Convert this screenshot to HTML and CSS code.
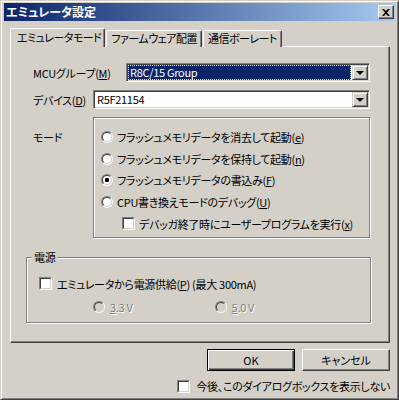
FILE: index.html
```html
<!DOCTYPE html>
<html lang="ja">
  <head>
    <meta charset="UTF-8" />
    <title>エミュレータ設定</title>
    <link rel="stylesheet" href="styles.css">
  </head>
  <body>
    <div class="window">
      <div class="titlebar">
        <span class="title">エミュレータ設定</span>
        <span class="close">
          <svg width="8" height="7" viewBox="0 0 8 7"><path d="M0 0h2l2 2 2-2h2L5 3.5 8 7H6L4 5 2 7H0l3-3.5z" fill="#000"/></svg>
        </span>
      </div>

      <div class="client">
        <div class="tabs">
          <div class="tab active">エミュレータモード</div>
          <div class="tab">ファームウェア配置</div>
          <div class="tab">通信ボーレート</div>
        </div>

        <div class="panel">
          <div class="row row-mcu">
            <span class="label label-mcu">MCUグループ(<u>M</u>)</span>
            <div class="combo combo-mcu">
              <div class="combo-value selected"><span>R8C/15 Group</span></div>
              <div class="drop"><i></i></div>
            </div>
          </div>

          <div class="row row-dev">
            <span class="label label-dev">デバイス(<u>D</u>)</span>
            <div class="combo combo-dev">
              <div class="combo-value">R5F21154</div>
              <div class="drop"><i></i></div>
            </div>
          </div>

          <div class="row row-mode">
            <span class="label label-mode">モード</span>
            <div class="group mode-group">
              <div class="option"><span class="radio"></span><span>フラッシュメモリデータを消去して起動(<u>e</u>)</span></div>
              <div class="option"><span class="radio"></span><span>フラッシュメモリデータを保持して起動(<u>n</u>)</span></div>
              <div class="option"><span class="radio on"></span><span>フラッシュメモリデータの書込み(<u>F</u>)</span></div>
              <div class="option"><span class="radio"></span><span>CPU書き換えモードのデバッグ(<u>U</u>)</span></div>
              <div class="option sub"><span class="check"></span><span>デバッガ終了時にユーザープログラムを実行(<u>x</u>)</span></div>
            </div>
          </div>

          <div class="group power-group">
            <span class="group-title">電源</span>
            <div class="option"><span class="check"></span><span>エミュレータから電源供給(<u>P</u>) (最大 300mA)</span></div>
            <div class="volts">
              <div class="option disabled v33"><span class="radio"></span><span><u>3</u>.3 V</span></div>
              <div class="option disabled v50"><span class="radio"></span><span><u>5</u>.0 V</span></div>
            </div>
          </div>
        </div>

        <div class="buttons">
          <button class="btn default">OK</button>
          <button class="btn">キャンセル</button>
        </div>

        <div class="dont-show">
          <span class="check"></span><span>今後、このダイアログボックスを表示しない</span>
        </div>
      </div>
    </div>
  </body>
</html>
```

FILE: styles.css
```css
body {
  margin: 0;
  font-family: "Noto Sans CJK JP", "Noto Sans", sans-serif;
  font-size: 11px;
  font-feature-settings: "palt";
  letter-spacing: -0.3px;
  color: #000;
  background: #d4d0c8;
}

.window {
  box-sizing: border-box;
  width: 399px;
  height: 400px;
  padding: 2px 3px;
  background: #d4d0c8;
  border: 1px solid;
  border-color: #d4d0c8 #404040 #404040 #d4d0c8;
  box-shadow: inset 1px 1px #fff, inset -1px -1px #808080;
}

.titlebar {
  height: 18px;
  display: flex;
  align-items: center;
  justify-content: space-between;
  padding: 0 1px 0 2px;
  background: linear-gradient(to right, #0a246a, #a6caf0);
}

.title {
  color: #fff;
  font-size: 12px;
  font-weight: bold;
  letter-spacing: 0;
  line-height: 14px;
}

.close {
  box-sizing: border-box;
  width: 16px;
  height: 14px;
  display: flex;
  align-items: center;
  justify-content: center;
  background: #d4d0c8;
  border: 1px solid;
  border-color: #fff #404040 #404040 #fff;
  box-shadow: inset -1px -1px #808080;
}

.client {
  padding: 7px 6px 0;
}

/* tabs */
.tabs {
  display: flex;
  align-items: flex-end;
  height: 19px;
  position: relative;
  z-index: 1;
  margin-bottom: -1px;
}

.tab {
  box-sizing: border-box;
  height: 17px;
  padding: 0 4px 0 4px;
  margin-left: 1px;
  line-height: 15px;
  letter-spacing: -0.5px;
  background: #d4d0c8;
  border-top: 1px solid #fff;
  border-left: 1px solid #fff;
  border-right: 1px solid #404040;
  border-radius: 2px 2px 0 0;
  box-shadow: inset -1px 0 #808080;
  white-space: nowrap;
}

.tab.active {
  height: 19px;
  margin-left: 0;
  padding: 0 3px 0 6px;
  line-height: 17px;
}

.panel {
  box-sizing: border-box;
  width: 380px;
  height: 297px;
  padding-top: 16px;
  border: 1px solid;
  border-color: #fff #404040 #404040 #fff;
  box-shadow: inset -1px -1px #808080;
}

.row {
  display: flex;
  align-items: center;
  padding-left: 22px;
}

.row-dev,
.row-mode {
  margin-top: 8px;
}

.row-mode {
  align-items: flex-start;
}

.label-mcu {
  width: 93px;
}

.label-dev,
.label-mode {
  width: 60px;
}

.label-mode {
  margin-top: 12px;
}

/* combo boxes */
.combo {
  box-sizing: border-box;
  height: 19px;
  display: flex;
  padding: 1px;
  background: #fff;
  border: 1px solid;
  border-color: #808080 #fff #fff #808080;
  box-shadow: inset 1px 1px #404040, inset -1px -1px #d4d0c8;
}

.combo-mcu {
  width: 244px;
}

.combo-dev {
  width: 277px;
}

.combo-value {
  flex: 1;
  padding: 0 2px;
  line-height: 15px;
}

.combo-value.selected {
  padding: 0;
  margin-right: 1px;
}

.combo-value.selected span {
  display: block;
  height: 100%;
  box-sizing: border-box;
  padding-left: 1px;
  line-height: 13px;
  color: #fff;
  background: #0a246a;
  border: 1px dotted #f0eca0;
}

.drop {
  box-sizing: border-box;
  width: 16px;
  height: 15px;
  display: flex;
  align-items: center;
  justify-content: center;
  background: #d4d0c8;
  border: 1px solid;
  border-color: #d4d0c8 #404040 #404040 #d4d0c8;
  box-shadow: inset 1px 1px #fff, inset -1px -1px #808080;
}

.drop i {
  width: 0;
  height: 0;
  border-left: 4px solid transparent;
  border-right: 4px solid transparent;
  border-top: 4px solid #000;
  margin-top: 1px;
}

/* group boxes */
.group {
  box-sizing: border-box;
  border: 1px solid #808080;
  box-shadow: inset 1px 1px #fff, 1px 1px #fff;
}

.mode-group {
  width: 277px;
  height: 121px;
  padding: 13px 0 0 7px;
  display: flex;
  flex-direction: column;
  gap: 9.5px;
}

.option {
  display: flex;
  align-items: center;
  gap: 4px;
  height: 12px;
  line-height: 12px;
  white-space: nowrap;
}

.option.sub {
  height: 13px;
  padding-left: 21px;
  gap: 4px;
}

.power-group {
  position: relative;
  width: 345px;
  height: 66px;
  margin: 19px 0 0 15px;
  padding: 19px 0 0 12px;
}

.group-title {
  position: absolute;
  top: -8px;
  left: 5px;
  padding: 0 2px;
  line-height: 14px;
  background: #d4d0c8;
}

.power-group .option {
  height: 13px;
  gap: 5px;
}

.volts {
  display: flex;
  margin-top: 10px;
  padding-left: 54px;
}

.v50 {
  margin-left: 82px;
}

/* radios and checks */
.radio {
  box-sizing: border-box;
  flex: none;
  width: 12px;
  height: 12px;
  border-radius: 50%;
  border: 1px solid;
  border-color: #808080 #fff #fff #808080;
}

.radio::before {
  content: "";
  display: block;
  box-sizing: border-box;
  width: 10px;
  height: 10px;
  border-radius: 50%;
  border: 1px solid;
  border-color: #404040 #d4d0c8 #d4d0c8 #404040;
  background: #fff;
}

.radio.on::before {
  background: radial-gradient(circle, #000 0, #000 2px, #fff 2.5px);
}

.check {
  box-sizing: border-box;
  flex: none;
  width: 13px;
  height: 13px;
  border: 1px solid;
  border-color: #808080 #fff #fff #808080;
}

.check::before {
  content: "";
  display: block;
  box-sizing: border-box;
  height: 11px;
  border: 1px solid;
  border-color: #404040 #d4d0c8 #d4d0c8 #404040;
  background: #fff;
}

.disabled {
  color: #808080;
  text-shadow: 1px 1px #fff;
}

.disabled .radio::before {
  background: #d4d0c8;
}

/* buttons */
.buttons {
  display: flex;
  justify-content: flex-end;
  gap: 7px;
  margin-top: 6px;
  width: 380px;
}

.btn {
  box-sizing: border-box;
  width: 88px;
  height: 22px;
  padding: 0;
  font: inherit;
  line-height: 18px;
  background: #d4d0c8;
  border: 1px solid;
  border-color: #fff #404040 #404040 #fff;
  box-shadow: inset -1px -1px #808080;
}

.btn.default {
  border-color: #000;
  box-shadow: inset 1px 1px #fff, inset -1px -1px #404040, inset -2px -2px #808080;
}

.dont-show {
  display: flex;
  align-items: center;
  justify-content: flex-end;
  gap: 6px;
  width: 380px;
  margin-top: 9px;
  line-height: 13px;
  white-space: nowrap;
}
```
